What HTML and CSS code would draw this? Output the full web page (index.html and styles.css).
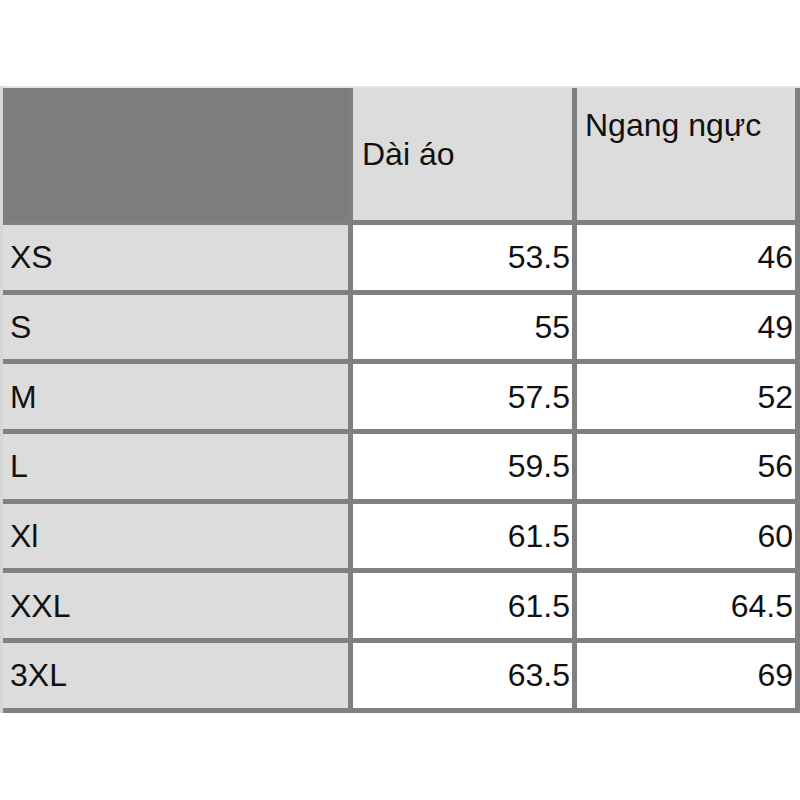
FILE: index.html
```html
<!DOCTYPE html>
<html lang="vi">
<head>
<meta charset="utf-8">
<title>Bảng size</title>
<link rel="stylesheet" href="styles.css">
</head>
<body>
<div class="sheet">
  <div class="cell corner"></div>
  <div class="cell head mid">Dài áo</div>
  <div class="cell head top">Ngang ngực</div>

  <div class="cell label">XS</div><div class="cell num">53.5</div><div class="cell num">46</div>
  <div class="cell label">S</div><div class="cell num">55</div><div class="cell num">49</div>
  <div class="cell label">M</div><div class="cell num">57.5</div><div class="cell num">52</div>
  <div class="cell label">L</div><div class="cell num">59.5</div><div class="cell num">56</div>
  <div class="cell label">Xl</div><div class="cell num">61.5</div><div class="cell num">60</div>
  <div class="cell label">XXL</div><div class="cell num">61.5</div><div class="cell num">64.5</div>
  <div class="cell label">3XL</div><div class="cell num">63.5</div><div class="cell num">69</div>
</div>
</body>
</html>
```

FILE: styles.css
```css
html, body {
  margin: 0;
  padding: 0;
  background: #ffffff;
}

body {
  padding-top: 86px;
  font-family: "Liberation Sans", Arial, sans-serif;
  font-size: 32px;
  color: #111111;
}

.sheet {
  display: grid;
  grid-template-columns: 345px 219px 218px;
  grid-template-rows: 132px repeat(7, 64.7px);
  gap: 5px;
  width: 797px;
  background: #808080;
  border-top: 2px solid #e2e2e2;
  border-left: 3px solid #d6d6d6;
  padding: 0 5px 5px 0;
  box-sizing: border-box;
  width: 800px;
}

.cell {
  display: flex;
  line-height: 1;
}

.corner {
  background: #7d7d7d;
}

.head {
  background: #dcdcdc;
  padding-left: 8px;
}

.head.mid {
  align-items: center;
  padding-left: 9px;
}

.head.top {
  align-items: flex-start;
  padding-top: 21px;
}

.label {
  background: #dcdcdc;
  align-items: center;
  padding-left: 7px;
}

.num {
  background: #ffffff;
  align-items: center;
  justify-content: flex-end;
  padding-right: 2px;
}
```
